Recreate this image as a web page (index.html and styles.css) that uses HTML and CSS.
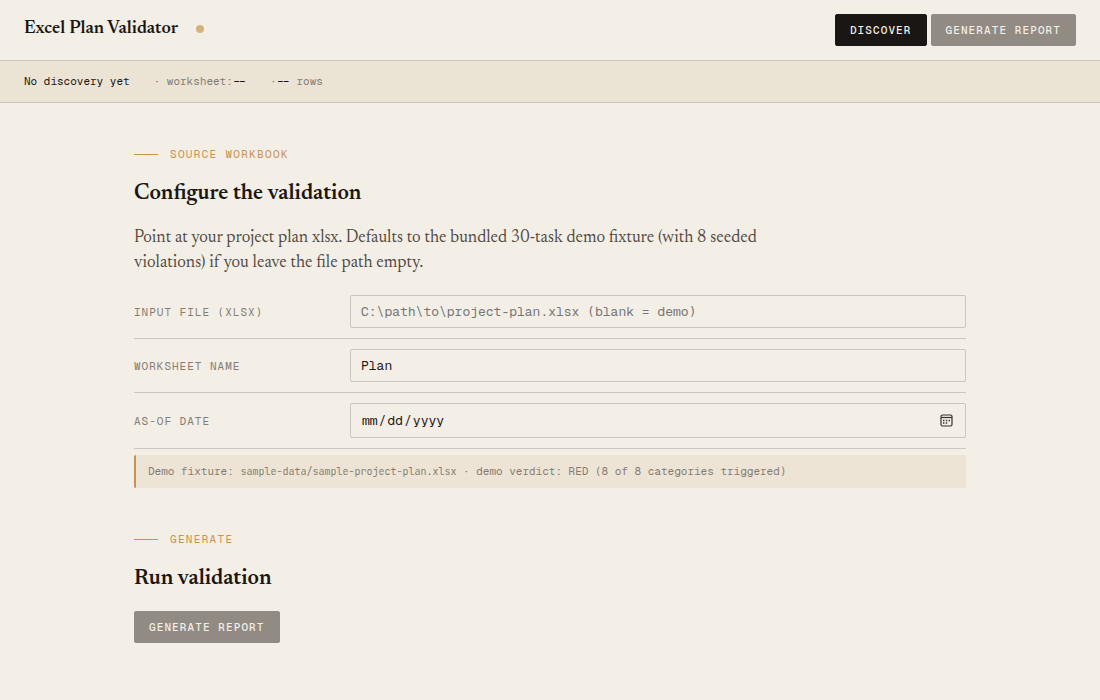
FILE: index.html
```html
<!DOCTYPE html>
<html lang="en">
<head>
<meta charset="utf-8">
<meta name="viewport" content="width=device-width, initial-scale=1">
<title>Excel Plan Validator</title>
<link rel="stylesheet" href="styles.css">
</head>
<body>
<header class="topbar">
  <div class="brand">
    <h1 class="brand-name">Excel Plan Validator</h1>
    <span class="brand-dot"></span>
  </div>
  <div class="actions">
    <button class="btn" type="button">Discover</button>
    <button class="btn" type="button" disabled>Generate report</button>
  </div>
</header>
<div class="status">
  <span class="strong">No discovery yet</span>
  <span>· worksheet:<span class="strong">--</span></span>
  <span>·<span class="strong">--</span> rows</span>
</div>
<main class="page">
  <section class="section">
    <p class="eyebrow">Source workbook</p>
    <h2 class="heading">Configure the validation</h2>
    <p class="lede">Point at your project plan xlsx. Defaults to the bundled 30-task demo fixture (with 8 seeded violations) if you leave the file path empty.</p>
    <div class="field">
      <label class="label" for="file">Input file (xlsx)</label>
      <input class="input" id="file" type="text" placeholder="C:\path\to\project-plan.xlsx (blank = demo)">
    </div>
    <div class="field">
      <label class="label" for="sheet">Worksheet name</label>
      <input class="input" id="sheet" type="text" value="Plan">
    </div>
    <div class="field">
      <label class="label" for="date">As-of date</label>
      <div class="date-box">
        <input class="input date" id="date" type="date">
        <svg class="date-icon" viewBox="0 0 13 13" aria-hidden="true">
          <rect x="1" y="1" width="11" height="11" rx="1.5" fill="none" stroke="#35312d" stroke-width="1.2"/>
          <path d="M1 3.5h11" stroke="#35312d" stroke-width="1.2"/>
          <path d="M3 6.5h1.4M5.8 6.5h1.4M8.6 6.5h1.4M3 9h1.4M5.8 9h1.4" stroke="#35312d" stroke-width="1.4"/>
        </svg>
      </div>
    </div>
    <p class="note">Demo fixture: <code class="path">sample-data/sample-project-plan.xlsx</code> · demo verdict: RED (8 of 8 categories triggered)</p>
  </section>
  <section class="section">
    <p class="eyebrow">Generate</p>
    <h2 class="heading">Run validation</h2>
    <button class="btn" type="button" disabled>Generate report</button>
  </section>
</main>
</body>
</html>
```
FILE: styles.css
```css
:root {
  --paper: #f3eee6;
  --ink: #1a1614;
  --muted: #857d74;
  --rule: #cdc6bf;
  --accent: #c8924f;
  --serif: "Newsreader", "Liberation Serif", serif;
  --mono: "Geist Mono", "Liberation Mono", monospace;
}

* {
  box-sizing: border-box;
}

body {
  margin: 0;
  background: var(--paper);
  color: var(--ink);
  font-family: var(--serif);
}

.topbar {
  display: flex;
  align-items: center;
  justify-content: space-between;
  padding: 14px 24px;
  border-bottom: 1px solid var(--rule);
}

.brand {
  display: flex;
  align-items: center;
  gap: 18px;
  padding-bottom: 2px;
}

.brand-name {
  margin: 0;
  font-size: 18px;
  line-height: 24px;
  font-weight: 600;
}

.brand-dot {
  width: 8px;
  height: 8px;
  border-radius: 50%;
  background: #d4b181;
}

.actions {
  display: flex;
  gap: 4px;
}

.btn {
  height: 32px;
  padding: 0 14px;
  border: 1px solid var(--ink);
  border-radius: 2px;
  background: var(--ink);
  color: var(--paper);
  font-family: var(--mono);
  font-size: 11px;
  font-weight: 500;
  letter-spacing: 0.1em;
  text-transform: uppercase;
}

.btn:disabled {
  border-color: #918b84;
  background: #918b84;
}

.status {
  display: flex;
  gap: 24px;
  padding: 12px 24px;
  border-bottom: 1px solid #cbc3b5;
  background: #ebe4d4;
  color: var(--muted);
  font-family: var(--mono);
  font-size: 11px;
  line-height: 17px;
}

.strong {
  color: var(--ink);
}

.page {
  max-width: 880px;
  margin: 0 auto;
  padding: 42px 24px 0;
}

.section {
  margin-bottom: 42px;
}

.eyebrow {
  display: flex;
  align-items: center;
  gap: 12px;
  margin: 0 0 16px;
  color: var(--accent);
  font-family: var(--mono);
  font-size: 11px;
  line-height: 18px;
  letter-spacing: 0.12em;
  text-transform: uppercase;
}

.eyebrow::before {
  content: "";
  width: 24px;
  height: 1px;
  background: var(--accent);
}

.heading {
  margin: 0 0 16px;
  font-size: 22px;
  line-height: 31px;
  font-weight: 600;
}

.lede {
  max-width: 640px;
  margin: 0 0 9px;
  color: #4f4841;
  font-size: 17px;
  line-height: 25px;
}

.field {
  display: grid;
  grid-template-columns: 200px 1fr;
  gap: 16px;
  align-items: center;
  padding: 10px 0;
  border-bottom: 1px solid var(--rule);
}

.label {
  color: var(--muted);
  font-family: var(--mono);
  font-size: 11px;
  letter-spacing: 1px;
  text-transform: uppercase;
}

.input {
  display: block;
  width: 100%;
  height: 33px;
  padding: 0 10px;
  border: 1px solid var(--rule);
  border-radius: 2px;
  background: transparent;
  color: var(--ink);
  font-family: var(--mono);
  font-size: 13px;
}

.input::placeholder {
  color: #757575;
}

.date-box {
  position: relative;
}

.date {
  height: 35px;
}

.date::-webkit-calendar-picker-indicator {
  opacity: 0;
}

.date-icon {
  position: absolute;
  top: 11px;
  right: 13px;
  width: 13px;
  height: 13px;
  pointer-events: none;
}

.note {
  margin: 6px 0 0;
  padding: 8px 12px;
  border-left: 2px solid var(--accent);
  border-radius: 2px;
  background: #eee4d5;
  color: var(--muted);
  font-family: var(--mono);
  font-size: 11px;
  line-height: 17px;
}

.path {
  font-family: "JetBrains Mono", "Liberation Mono", monospace;
  font-size: 10px;
}
```
